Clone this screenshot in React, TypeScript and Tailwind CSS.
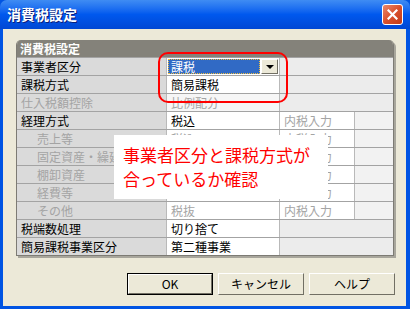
import React from "react";

const font = { fontFamily: '"Noto Sans CJK JP", "Noto Sans", sans-serif' };

type Row = {
  label: string;
  sub?: boolean;
  disabled?: boolean;
  value?: string;
  valueDim?: boolean;
  kind: "merged" | "split";
};

const rows: Row[] = [
  { label: "事業者区分", kind: "merged" },
  { label: "課税方式", value: "一般課税", kind: "merged" },
  { label: "仕入税額控除", disabled: true, value: "比例配分", valueDim: true, kind: "merged" },
  { label: "経理方式", value: "税込", kind: "split" },
  { label: "売上等", sub: true, value: "税込", valueDim: true, kind: "split" },
  { label: "固定資産・繰延資産", sub: true, value: "税込", valueDim: true, kind: "split" },
  { label: "棚卸資産", sub: true, value: "税込", valueDim: true, kind: "split" },
  { label: "経費等", sub: true, value: "税込", valueDim: true, kind: "split" },
  { label: "その他", sub: true, value: "税抜", valueDim: true, kind: "split" },
  { label: "税端数処理", value: "切り捨て", kind: "merged" },
  { label: "簡易課税事業区分", value: "第二種事業", kind: "merged" },
];

function TableRow({ row, index }: { row: Row; index: number }) {
  const grey = row.sub || row.disabled;
  return (
    <div className="flex h-[18px] border-t border-[#a3a3a3]">
      <div
        className={`w-[150px] shrink-0 overflow-hidden whitespace-nowrap border-r border-[#b9b9b9] bg-[#dadada] text-[12px] leading-[17px] ${
          row.sub ? "pl-[20px] text-[#a4a4a4]" : row.disabled ? "pl-[4px] text-[#a4a4a4]" : "pl-[4px] text-black"
        }`}
      >
        {row.label}
      </div>
      <div
        className={`relative w-[113px] shrink-0 border-r border-[#b9b9b9] pl-[4px] text-[12px] leading-[17px] ${
          row.valueDim ? "text-[#a4a4a4]" : "text-black"
        } ${row.disabled ? "bg-[#f6f6f6]" : "bg-white"}`}
      >
        {index === 0 ? (
          <div className="absolute left-0 top-0 flex h-[17px] w-[112px] bg-white">
            <div className="m-[1px] flex-1 border border-dotted border-[#f0c040] bg-[#316ac5] pl-[2px] text-[12px] leading-[13px] text-white">
              課税
            </div>
            <div className="mt-[1px] mb-[1px] mr-[1px] flex w-[17px] items-center justify-center border border-t-white border-l-white border-b-[#716f64] border-r-[#716f64] bg-[#ece9d8]">
              <div className="h-0 w-0 border-x-[4px] border-t-[4px] border-x-transparent border-t-black" />
            </div>
          </div>
        ) : index === 1 ? (
          <div className="absolute left-0 top-0 h-[17px] w-[112px] bg-white pl-[4px] text-black">簡易課税</div>
        ) : (
          row.value
        )}
      </div>
      {row.kind === "split" ? (
        <>
          <div className="w-[75px] shrink-0 border-r border-[#b9b9b9] bg-white pl-[4px] text-[12px] leading-[17px] text-[#a4a4a4]">
            内税入力
          </div>
          <div className="flex-1 bg-[#f2f2f2]" />
        </>
      ) : (
        <div className="flex-1 bg-[#ececec]" />
      )}
    </div>
  );
}

function XPButton({ label, primary }: { label: string; primary?: boolean }) {
  return (
    <div className={`h-[22px] w-[86px] ${primary ? "border border-black" : ""}`}>
      <div
        className={`flex h-full items-center justify-center border border-t-white border-l-white border-b-[#716f64] border-r-[#716f64] bg-[#ece9d8] text-[12px] text-black`}
      >
        {label}
      </div>
    </div>
  );
}

export default function App() {
  return (
    <div className="relative flex h-[309px] w-[410px] flex-col overflow-hidden bg-[#0054e3]" style={font}>
      {/* title bar */}
      <div className="flex h-[29px] shrink-0 items-center justify-between rounded-t-[7px] bg-gradient-to-b from-[#3f8cf3] via-[#0058ee] to-[#0047d4] pl-[7px] pr-[7px]">
        <span className="text-[14px] font-bold text-white [text-shadow:1px_1px_0_#0a1e7a]">消費税設定</span>
        <div className="flex h-[21px] w-[21px] items-center justify-center rounded-[3px] border border-white bg-gradient-to-br from-[#e8876a] via-[#d9502c] to-[#c23a16]">
          <svg width="11" height="11" viewBox="0 0 11 11">
            <path d="M1.5 1.5 L9.5 9.5 M9.5 1.5 L1.5 9.5" stroke="white" strokeWidth="2.2" strokeLinecap="square" />
          </svg>
        </div>
      </div>

      {/* body */}
      <div className="ml-[3px] mr-[4px] mb-[3px] flex flex-1 flex-col bg-[#ece9d8]">
        <div className="ml-[13px] mt-[11px] w-[380px]">
          <div className="w-[378px] overflow-hidden rounded-t-[5px] border-x border-b border-[#7d7b74] shadow-[2px_2px_0_#a8a69c]">
            <div className="h-[17px] bg-[#84827a] pl-[3px] text-[12px] font-bold leading-[17px] text-white">
              消費税設定
            </div>
            {rows.map((r, i) => (
              <TableRow key={r.label} row={r} index={i} />
            ))}
          </div>
        </div>

        <div className="mt-[17px] flex justify-end gap-[5px] pr-[11px]">
          <XPButton label="OK" primary />
          <XPButton label="キャンセル" />
          <XPButton label="ヘルプ" />
        </div>
      </div>

      {/* red outline */}
      <div className="absolute left-[158px] top-[52px] h-[51px] w-[130px] rounded-[10px] border-2 border-[#ff0000]" />

      {/* callout */}
      <div className="absolute left-[114px] top-[135px] h-[64px] w-[214px] bg-white pl-[9px] pt-[8px] text-[17px] leading-[24px] text-[#ff0000]">
        <div className="whitespace-nowrap">事業者区分と課税方式が</div>
        <div className="whitespace-nowrap">合っているか確認</div>
      </div>
    </div>
  );
}
